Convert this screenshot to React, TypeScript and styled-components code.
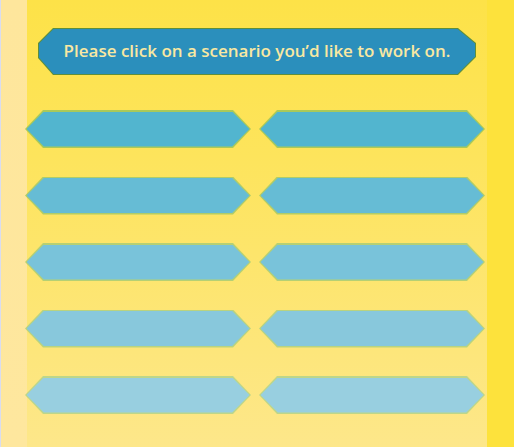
import React from "react";
import styled, { createGlobalStyle } from "styled-components";

const GlobalStyle = createGlobalStyle`
  html, body { margin: 0; padding: 0; }
  body { font-family: "Open Sans", "Noto Sans", sans-serif; }
`;

const Page = styled.div`
  width: 514px;
  height: 447px;
  box-sizing: border-box;
  overflow: hidden;
  border-left: 1px solid #d9dcef;
  padding-top: 28px;
  background:
    linear-gradient(#fee69c, #fee79e) 0 0 / 26px 100% no-repeat,
    linear-gradient(#fde23c, #fde23c) 486px 0 / 27px 100% no-repeat,
    linear-gradient(180deg, #fde248 0%, #fde45c 35%, #fde78a 100%);
  display: flex;
  flex-direction: column;
`;

const Banner = styled.div`
  margin-left: 37px;
  width: 438px;
  height: 47px;
  position: relative;
  background: #5f8f3c;
  clip-path: polygon(15px 0, calc(100% - 18px) 0, 100% 15px, 100% calc(100% - 18px), calc(100% - 18px) 100%, 15px 100%, 0 calc(100% - 17px), 0 15px);
  display: flex;
  align-items: center;
  justify-content: center;

  &::before {
    content: "";
    position: absolute;
    inset: 1px;
    background: #2b8fbc;
    clip-path: polygon(14.5px 0, calc(100% - 17.5px) 0, 100% 14.5px, 100% calc(100% - 17.5px), calc(100% - 17.5px) 100%, 14.5px 100%, 0 calc(100% - 16.5px), 0 14.5px);
  }
`;

const BannerText = styled.span`
  position: relative;
  color: #f9e8a2;
  font-size: 17px;
  font-weight: 600;
  letter-spacing: 0;
  margin-top: -3px;
`;

const Grid = styled.div`
  margin-top: 35px;
  margin-left: 24px;
  display: grid;
  grid-template-columns: 226px 226px;
  column-gap: 8px;
  row-gap: 28.5px;
`;

const Choice = styled.button<{ $fill: string; $edge: string }>`
  all: unset;
  box-sizing: border-box;
  position: relative;
  display: block;
  width: 226px;
  height: 38px;
  cursor: pointer;
  background: ${(p) => p.$edge};
  clip-path: polygon(18px 0, calc(100% - 18px) 0, 100% 50%, calc(100% - 18px) 100%, 18px 100%, 0 50%);

  &::before {
    content: "";
    position: absolute;
    inset: 1.5px;
    background: ${(p) => p.$fill};
    clip-path: polygon(17.3px 0, calc(100% - 17.3px) 0, 100% 50%, calc(100% - 17.3px) 100%, 17.3px 100%, 0 50%);
  }
`;

const rows = [
  { fill: "#52b5cf", edge: "#a9c95a" },
  { fill: "#66bcd5", edge: "#b0cc68" },
  { fill: "#79c3da", edge: "#b5d074" },
  { fill: "#88c8dc", edge: "#b9d37f" },
  { fill: "#98cfe0", edge: "#bdd68a" },
];

export default function App() {
  return (
    <>
      <GlobalStyle />
      <Page>
        <Banner>
          <BannerText>Please click on a scenario you’d like to work on.</BannerText>
        </Banner>
        <Grid>
          {rows.flatMap((r, i) => [
            <Choice key={`${i}a`} $fill={r.fill} $edge={r.edge} aria-label={`Scenario ${i * 2 + 1}`} />,
            <Choice key={`${i}b`} $fill={r.fill} $edge={r.edge} aria-label={`Scenario ${i * 2 + 2}`} />,
          ])}
        </Grid>
      </Page>
    </>
  );
}
